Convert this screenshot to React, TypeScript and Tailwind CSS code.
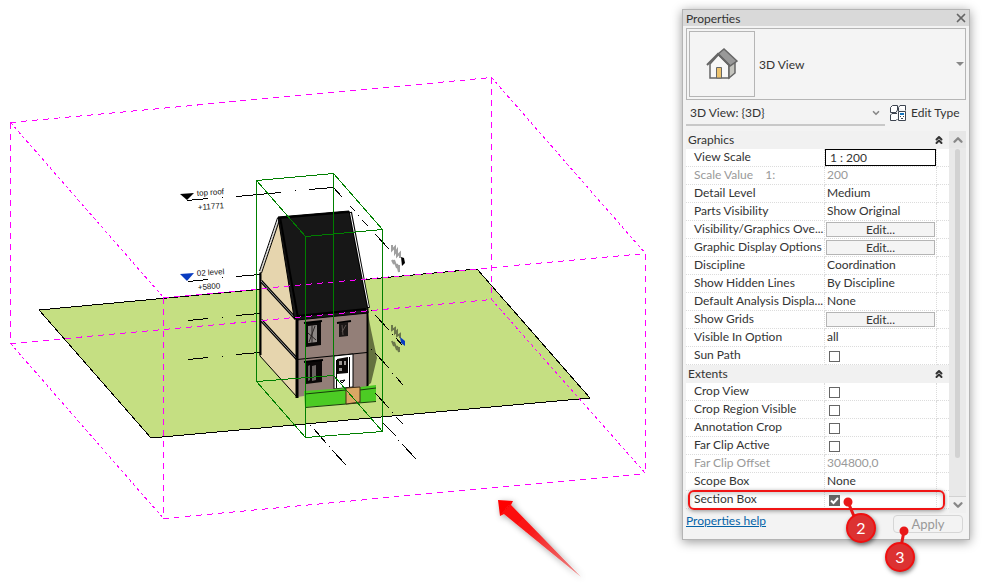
import { ReactNode } from 'react'
import { ChevronDown, ChevronUp, ChevronsUp, X } from 'lucide-react'

type Kind = 'text' | 'input' | 'button' | 'checkbox'

interface Property {
  label: string
  kind: Kind
  value?: string
  checked?: boolean
  disabled?: boolean
  highlighted?: boolean
}

interface Group {
  title: string
  rows: Property[]
}

const groups: Group[] = [
  {
    title: 'Graphics',
    rows: [
      { label: 'View Scale', kind: 'input', value: '1 : 200' },
      { label: 'Scale Value    1:', kind: 'text', value: '200', disabled: true },
      { label: 'Detail Level', kind: 'text', value: 'Medium' },
      { label: 'Parts Visibility', kind: 'text', value: 'Show Original' },
      { label: 'Visibility/Graphics Ove...', kind: 'button', value: 'Edit...' },
      { label: 'Graphic Display Options', kind: 'button', value: 'Edit...' },
      { label: 'Discipline', kind: 'text', value: 'Coordination' },
      { label: 'Show Hidden Lines', kind: 'text', value: 'By Discipline' },
      { label: 'Default Analysis Displa...', kind: 'text', value: 'None' },
      { label: 'Show Grids', kind: 'button', value: 'Edit...' },
      { label: 'Visible In Option', kind: 'text', value: 'all' },
      { label: 'Sun Path', kind: 'checkbox' },
    ],
  },
  {
    title: 'Extents',
    rows: [
      { label: 'Crop View', kind: 'checkbox' },
      { label: 'Crop Region Visible', kind: 'checkbox' },
      { label: 'Annotation Crop', kind: 'checkbox' },
      { label: 'Far Clip Active', kind: 'checkbox' },
      { label: 'Far Clip Offset', kind: 'text', value: '304800,0', disabled: true },
      { label: 'Scope Box', kind: 'text', value: 'None' },
      { label: 'Section Box', kind: 'checkbox', checked: true, highlighted: true },
    ],
  },
]

function SectionBoxLines() {
  return (
    <g stroke="#ff00ff" fill="none" shapeRendering="crispEdges">
      <g strokeDasharray="6 5">
        <path d="M10.5 122.5L491.5 77.5" />
        <path d="M10.5 343.5L491.5 299.5" />
        <path d="M163.5 297.5L645.5 253.5" />
        <path d="M163.5 518.5L645.5 473.5" />
        <path d="M10.5 122.5V343.5M163.5 297.5V518.5M491.5 77.5V299.5M645.5 253.5V473.5" />
      </g>
      <g strokeDasharray="3 3">
        <path d="M10.5 122.5L163.5 297.5M491.5 77.5L645.5 253.5" />
        <path d="M10.5 343.5L163.5 518.5M491.5 299.5L645.5 473.5" />
      </g>
    </g>
  )
}

function House() {
  return (
    <g>
      <path d="M368 314L371 330L377 358L371 383L367 386Z" fill="#64713f" />
      {/* gable wall */}
      <path d="M279 218L260 273V356L297 397V318Z" fill="#e6d5ae" stroke="#000" />
      <path d="M260.5 273V355" stroke="#000" strokeWidth="2" />
      <path d="M261 281L296 319M261 320L297 359" stroke="#000" strokeWidth="3" />
      <path d="M261 281L296 319M261 320L297 359" stroke="#999" strokeWidth="1" />
      <path d="M277.5 218L259.5 271M279.5 220L261.5 273" stroke="#000" />
      <path d="M278.5 219L260.5 272" stroke="#fff" />
      {/* front wall */}
      <path d="M297 319L367 311V387L297 397Z" fill="#937f78" />
      <path d="M297 318V398" stroke="#000" strokeWidth="3" />
      <path d="M367.5 311V387" stroke="#000" strokeWidth="2" />
      <path d="M297 359.5L367 352.5" stroke="#000" />
      {/* roof */}
      <path d="M278 217L349 211L368 309L368 313L297 320L294 317Z" fill="#171717" stroke="#000" />
      <path d="M280 217L298 318M278 218L349 212M297 316L366 309" stroke="#000" strokeWidth="2" />
      <path d="M350.5 212L368.5 308" stroke="#000" strokeWidth="3" />
      <path d="M350.5 213L368.5 307" stroke="#fff" />
      {/* windows */}
      <path d="M305 323L321 321V345L306 347Z" fill="#0b0808" />
      <path d="M308 326L317 325V342L308 343Z" fill="#8b8583" />
      <path d="M309 342L315 326M308 333L316 340M312 325V343" stroke="#2b2524" />
      <path d="M304 323L322 321M337 323L351 321" stroke="#000" strokeWidth="2" />
      <path d="M339 323L348 322V336L339 337Z" fill="#1b1716" />
      <path d="M342 325L343 335M346 325L342 332" stroke="#5c5350" />
      <path d="M306 362L322 360V382L306 384Z" fill="#0b0808" />
      <path d="M308 366L310 365V380L308 381ZM312 366L316 365V380L312 381Z" fill="#6b6462" />
      <path d="M304 362L323 360" stroke="#000" strokeWidth="2" />
      {/* front door */}
      <path d="M334 356L353 354V387L334 389Z" fill="#fff" stroke="#000" />
      <path d="M337 359L348 357V373L337 374Z" fill="#0b0808" />
      <path d="M339 361H342V365H339ZM344 361H346V365H344ZM339 368H342V371H339Z" fill="#9a9694" />
      <path d="M336.5 360V388M349.5 357V387M340 381L345 380L342 383Z" stroke="#000" fill="none" />
      {/* hedge and gate */}
      <path d="M304 391L346 388V404L305 407Z" fill="#4ccb24" />
      <path d="M360 387L376 385V401L360 403Z" fill="#4ccb24" />
      <path d="M305 394L346 390M360 390L376 388M305 407.5L376 401.5" stroke="#163d0a" />
      <path d="M346 388L360 387V402L346 404Z" fill="#dba764" stroke="#3f2d15" />
    </g>
  )
}

function LevelLines() {
  return (
    <g stroke="#000" fill="none" shapeRendering="crispEdges">
      <path d="M187 200.5L208 198.5M222 197.5H223M236 196.5L281 192.5M295 190.5H296M309 189.5L333 187.5" />
      <path d="M333 187L342 197M350 206L355 211M358 215L359 216M362 220L368 226M375 234L389 249" />
      <path d="M188 281.5L208 279.5M222 277.5H223M236 276.5L260 274.5" />
      <path d="M188 320.5L208 318.5M222 317.5H223M236 315.5L260 313.5" />
      <path d="M188 359.5L208 357.5M222 356.5H223M236 354.5L260 352.5" />
      <path d="M371 310L372 311M375 315L389 330M392 334L393 335M396 338L402 345" />
      <path d="M371 349L372 350M375 353L389 368M392 373L393 374M396 377L403 385" />
      <path d="M375 393L389 408M392 412L393 413M396 417L403 424" />
      <path d="M382 422L396 436M398 440L399 441M402 444L416 459" />
      <path d="M310 425L311 426M314 429L326 443M329 446L330 447M332 450L346 465" />
    </g>
  )
}

function ModelView() {
  return (
    <svg
      viewBox="0 0 682 584"
      className="block w-full h-auto"
      role="img"
      aria-label="House model with section box"
    >
      <defs>
        <linearGradient id="arrow" x1="498" y1="500" x2="582" y2="578" gradientUnits="userSpaceOnUse">
          <stop offset="0" stopColor="#ff0000" />
          <stop offset="0.4" stopColor="#f91a1a" />
          <stop offset="1" stopColor="#e98c8c" />
        </linearGradient>
        <filter id="arrow-shadow" x="-20%" y="-20%" width="140%" height="140%">
          <feDropShadow dx="2" dy="2" stdDeviation="3" floodOpacity="0.4" />
        </filter>
      </defs>

      <path d="M39 310L477 269L590 398L151 438Z" fill="#c5df82" stroke="#000" shapeRendering="crispEdges" />
      <House />
      <LevelLines />
      <SectionBoxLines />

      <g stroke="#007f00" fill="none" shapeRendering="crispEdges">
        <path d="M256.5 180.5L333.5 173.5L382.5 229.5L305.5 236.5Z" />
        <path d="M256.5 381.5L333.5 375.5L382.5 431.5L305.5 437.5Z" />
        <path d="M256.5 180V382M333.5 173V376M382.5 229V432M305.5 236V438" />
      </g>

      <path d="M180 194L194 193L187 200Z" fill="#000" />
      <path d="M180 274L194 273L187 281Z" fill="#0a3cc0" />
      <g className="font-['Liberation_Sans'] text-[8px]" fill="#111">
        <text transform="translate(197 196) rotate(-4)">top roof</text>
        <text transform="translate(198 210) rotate(-4)">+11771</text>
        <text transform="translate(197 276) rotate(-4)">02 level</text>
        <text transform="translate(198 290) rotate(-4)">+5800</text>
      </g>

      {/* level heads seen edge-on */}
      <g stroke="#777" strokeWidth="2" strokeOpacity="0.7" fill="none">
        <path d="M392 245V250L395 247V253L397 250V256L400 253V258M392 260L394 264V260L397 268V264L399 272V265" />
        <path d="M392 325V330L395 328V333L397 331V336L400 334V338M392 341L394 346V342L397 350V346L399 352V347" stroke="#454a33" />
      </g>
      <path d="M401 257L404 258L405 263L402 266Z" fill="#000" />
      <path d="M400 337L405 341V346L401 343Z" fill="#0a3cc0" />

      <path
        d="M498 500L513 501L511 505L581 577L504 514L500 516Z"
        fill="url(#arrow)"
        filter="url(#arrow-shadow)"
      />
    </svg>
  )
}

function HouseIcon() {
  return (
    <svg width="32" height="32" viewBox="0 0 32 32" aria-hidden="true">
      <path d="M4 16L13 6L23 17V30H4Z" fill="#f7f7f7" stroke="#666" strokeWidth="1.5" />
      <path d="M23 18L29 13V25L23 30Z" fill="#c4c4be" stroke="#666" strokeWidth="1.5" />
      <path d="M12 6L18 1L31 13L24 18Z" fill="#999" stroke="#666" strokeWidth="1.5" />
      <path d="M1 17L12 6L24 18" fill="none" stroke="#666" strokeWidth="2" />
      <path d="M10.5 19.5H15.5V30H10.5Z" fill="#edc36d" stroke="#666" />
    </svg>
  )
}

function EditTypeIcon() {
  return (
    <svg width="16" height="16" viewBox="0 0 16 16" fill="none" stroke="#3d4450" aria-hidden="true">
      <path d="M0.5 2.5L2.5 0.5H7.5V5L6 7.5H0.5ZM8.5 2.5L10 0.5H15.5V5.5M8.5 2.5V6" fill="#fff" />
      <path d="M7 8.5H2L0.5 10V15.5H6L7.5 14" fill="#fff" />
      <path d="M8.5 6.5H15.5V15.5H8.5Z" fill="#fff" />
      <path d="M10 9H14" stroke="#1674bd" strokeWidth="2" />
      <path d="M10 11.5H11M13 11.5H14M11 13.5H13" />
    </svg>
  )
}

function Value({ row, id }: { row: Property; id: string }) {
  if (row.kind === 'input') {
    return (
      <input
        id={id}
        defaultValue={row.value}
        className="block w-full h-[17px] border border-black bg-white pl-1 text-xs leading-4 outline-none"
      />
    )
  }
  if (row.kind === 'button') {
    return (
      <button
        id={id}
        className="block w-[109px] h-[15px] ml-px border border-[#b5b5b5] bg-[#f4f4f4] text-xs leading-3"
      >
        {row.value}
      </button>
    )
  }
  if (row.kind === 'checkbox') {
    return (
      <span className="relative flex w-[11px] h-[11px] mt-0.5 ml-1">
        <input
          id={id}
          type="checkbox"
          defaultChecked={row.checked}
          className="peer w-[11px] h-[11px] appearance-none border border-[#666] bg-white checked:bg-[#666]"
        />
        <svg
          viewBox="0 0 11 11"
          className="absolute inset-0 hidden peer-checked:block pointer-events-none"
          fill="none"
          stroke="#fff"
          strokeWidth="2"
        >
          <path d="M2 5.5L4.5 8L9 3" />
        </svg>
      </span>
    )
  }
  return <span className="block pb-px pl-0.5">{row.value}</span>
}

function PropertyRow({ row }: { row: Property }) {
  const id = row.label.toLowerCase().replace(/[^a-z]+/g, '-')

  return (
    <tr className={`h-[18px] ${row.disabled ? 'text-[#999]' : ''}`}>
      <th
        scope="row"
        className="relative w-[139px] p-0 pb-px pl-2 border-b border-r border-dotted border-[#dcdcdc] text-left font-normal whitespace-pre"
      >
        {row.kind === 'text' ? row.label : <label htmlFor={id}>{row.label}</label>}
        {row.highlighted && (
          <span className="absolute left-0.5 -top-px z-10 w-[257px] h-5 rounded-md border-2 border-[#f01414] shadow-[0_1px_4px_rgba(0,0,0,0.4),inset_0_2px_4px_rgba(0,0,0,0.2)] pointer-events-none" />
        )}
      </th>
      <td className="w-28 p-0 border-b border-r border-dotted border-[#dcdcdc]">
        <Value row={row} id={id} />
      </td>
      <td className="p-0 border-b border-dotted border-[#dcdcdc]" />
    </tr>
  )
}

function Callout({ className, children }: { className: string; children: ReactNode }) {
  return (
    <span
      className={`absolute z-20 flex items-center justify-center w-[30px] h-[30px] rounded-full border-2 border-[#f01010] bg-[#dc3232] text-white text-base shadow-[1px_2px_4px_rgba(0,0,0,0.5)] ${className}`}
    >
      {children}
    </span>
  )
}

function PropertiesPanel() {
  return (
    <aside className="relative border border-[#b4b4b4] bg-[#f3f3f3] shadow-[0_2px_10px_rgba(0,0,0,0.4)]">
      <header className="flex items-center justify-between h-4 pl-[3px] pr-px bg-[#d9d9d9]">
        <h1 className="pt-0.5">Properties</h1>
        <button aria-label="Close" className="text-[#666]">
          <X size={14} strokeWidth={3} />
        </button>
      </header>

      <div className="px-[3px]">
        <button className="flex items-center w-full h-[72px] mt-0.5 pl-0.5 pr-px border border-[#b5b5b5] bg-[#f4f4f4] text-left">
          <span className="flex items-center justify-center w-[66px] h-[66px] border border-[#b5b5b5]">
            <HouseIcon />
          </span>
          <span className="flex-1 pt-0.5 pl-1">3D View</span>
          <svg width="8" height="4" viewBox="0 0 8 4" fill="#888" aria-hidden="true">
            <path d="M0 0H8L4 4Z" />
          </svg>
        </button>

        <div className="flex items-center h-[26px]">
          <div className="relative w-[199px] h-full border-b-2 border-[#c8c8c8]">
            <select
              aria-label="View"
              className="block w-full h-full pt-0.5 pl-1 appearance-none bg-transparent outline-none"
            >
              <option>3D View: {'{3D}'}</option>
            </select>
            <ChevronDown size={10} strokeWidth={4} className="absolute right-1 top-2 text-[#888] pointer-events-none" />
          </div>
          <button className="flex items-center gap-[5px] ml-[5px]">
            <EditTypeIcon />
            Edit Type
          </button>
        </div>

        <div className="flex mt-[5px]">
          <div className="flex-1">
            <table className="w-full table-fixed border-separate border-spacing-0 bg-white">
              <colgroup>
                <col className="w-[139px]" />
                <col className="w-28" />
                <col />
              </colgroup>
              {groups.map((group) => (
                <tbody key={group.title}>
                  <tr className="h-[18px] bg-[#f1f1f1]">
                    <th colSpan={3} className="p-0 font-normal">
                      <button className="flex items-center justify-between w-full pl-0.5 pr-1">
                        {group.title}
                        <ChevronsUp size={12} strokeWidth={4} />
                      </button>
                    </th>
                  </tr>
                  {group.rows.map((row) => (
                    <PropertyRow key={row.label} row={row} />
                  ))}
                </tbody>
              ))}
            </table>
          </div>
          <div className="flex flex-col items-center w-[17px] bg-[#e9e9e9] text-[#888]">
            <button aria-label="Scroll up" className="flex items-center justify-center w-full h-[17px] bg-[#e6e6e6]">
              <ChevronUp size={14} strokeWidth={4} />
            </button>
            <div className="flex-1 w-full pt-px pb-[38px] flex justify-center">
              <div className="w-[5px] rounded-full bg-[#d2d2d2]" />
            </div>
            <button aria-label="Scroll down" className="flex items-center justify-center w-full h-[17px] -mb-1 border-t border-[#d2d2d2] bg-[#f0f0f0]">
              <ChevronDown size={14} strokeWidth={4} />
            </button>
          </div>
        </div>

        <footer className="flex items-start justify-between h-[30px] pt-1">
          <a href="#help" className="text-[#0563a8] underline">
            Properties help
          </a>
          <button disabled className="w-[70px] h-[18px] mt-0.5 mr-[3px] rounded-sm border border-[#d6d6d6] text-[13px] leading-4 text-[#999]">
            Apply
          </button>
        </footer>
      </div>

      <svg
        width="80"
        height="50"
        viewBox="0 0 80 50"
        className="absolute right-12 -bottom-2 z-10 pointer-events-none"
        fill="#e81818"
        stroke="#e81818"
        strokeWidth="3"
        aria-hidden="true"
      >
        <circle cx="7" cy="5" r="3" />
        <path d="M7 5L15 24M63 34L60 50" />
        <circle cx="63" cy="34" r="3" />
      </svg>
      <Callout className="right-[93px] -bottom-1">2</Callout>
      <Callout className="right-[54px] -bottom-[33px]">3</Callout>
    </aside>
  )
}

export default function App() {
  return (
    <div className="flex items-start bg-white font-['Lato',sans-serif] text-xs leading-4 text-[#333]">
      <main className="flex-1 min-w-0">
        <ModelView />
      </main>
      <div className="w-72 shrink-0 mt-[9px] mr-[13px]">
        <PropertiesPanel />
      </div>
    </div>
  )
}
